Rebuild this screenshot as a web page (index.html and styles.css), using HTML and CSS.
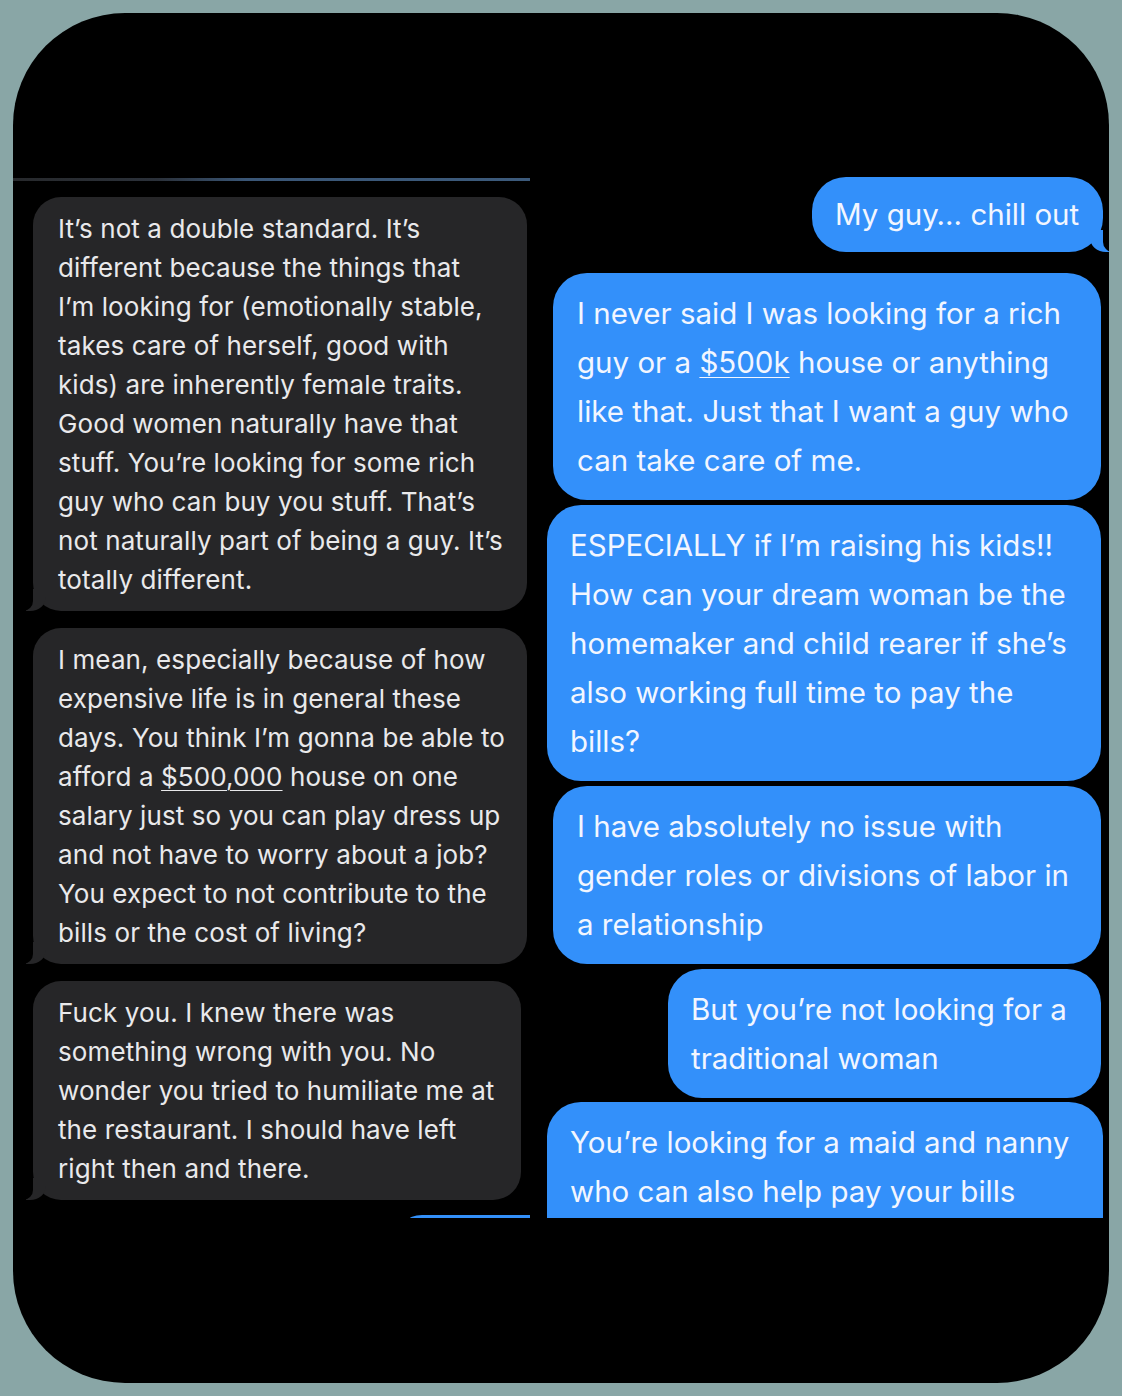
FILE: index.html
```html
<!DOCTYPE html>
<html lang="en">
<head>
<meta charset="UTF-8">
<meta name="viewport" content="width=device-width, initial-scale=1.0">
<title>Messages</title>
<link rel="stylesheet" href="styles.css">
</head>
<body>
    <div class="frame">
        <!-- left screenshot: received messages -->
        <div class="shot shot-left">
            <div class="rule"></div>
            <div class="bubble recv">It’s not a double standard. It’s<br>different because the things that<br>I’m looking for (emotionally stable,<br>takes care of herself, good with<br>kids) are inherently female traits.<br>Good women naturally have that<br>stuff. You’re looking for some rich<br>guy who can buy you stuff. That’s<br>not naturally part of being a guy. It’s<br>totally different.</div>
            <div class="bubble recv">I mean, especially because of how<br>expensive life is in general these<br>days. You think I’m gonna be able to<br>afford a <u>$500,000</u> house on one<br>salary just so you can play dress up<br>and not have to worry about a job?<br>You expect to not contribute to the<br>bills or the cost of living?</div>
            <div class="bubble recv recv-narrow">Fuck you. I knew there was<br>something wrong with you. No<br>wonder you tried to humiliate me at<br>the restaurant. I should have left<br>right then and there.</div>
            <div class="bubble sent-peek"></div>
        </div>

        <!-- right screenshot: sent messages -->
        <div class="shot shot-right">
            <div class="bubble sent sent-short">My guy… chill out</div>
            <div class="bubble sent sent-a">I never said I was looking for a rich<br>guy or a <u>$500k</u> house or anything<br>like that. Just that I want a guy who<br>can take care of me.</div>
            <div class="bubble sent sent-b">ESPECIALLY if I’m raising his kids!!<br>How can your dream woman be the<br>homemaker and child rearer if she’s<br>also working full time to pay the<br>bills?</div>
            <div class="bubble sent sent-a">I have absolutely no issue with<br>gender roles or divisions of labor in<br>a relationship</div>
            <div class="bubble sent sent-c">But you’re not looking for a<br>traditional woman</div>
            <div class="bubble sent sent-b sent-last">You’re looking for a maid and nanny<br>who can also help pay your bills</div>
        </div>
    </div>
</body>
</html>
```

FILE: styles.css
```css
body {
    margin: 0;
    padding: 0;
    background-color: #89a6a6;
}

.frame {
    display: flex;
    margin: 13px;
    width: 1096px;
    height: 1370px;
    background-color: #000;
    border-radius: 112px;
    overflow: hidden;
}

.shot {
    box-sizing: border-box;
    height: 1205px;
    padding-top: 165px;
    overflow: hidden;
    display: flex;
    flex-direction: column;
}

.shot > * {
    flex-shrink: 0;
}

.shot-left {
    width: 517px;
    font-family: "Inter", "Liberation Sans", sans-serif;
}

.shot-right {
    width: 579px;
    padding-top: 164px;
    padding-right: 8px;
    align-items: flex-end;
    font-family: "Inter", "Liberation Sans", sans-serif;
}

.rule {
    height: 3px;
    margin-bottom: 16px;
    background: linear-gradient(90deg, #27292c 0%, #2b313a 28%, #3a5676 45%, #3c5a7b 100%);
}

.bubble {
    position: relative;
    box-sizing: border-box;
}

/* grey received bubbles */
.recv {
    width: 494px;
    margin-left: 20px;
    margin-bottom: 17px;
    padding: 12px 16px 12px 25px;
    background-color: #262628;
    color: #e9e9eb;
    border-radius: 28px;
    font-size: 26px;
    letter-spacing: 0.1px;
    line-height: 39px;
    white-space: nowrap;
}

.recv-narrow {
    width: 488px;
    margin-bottom: 15px;
}

.recv::before {
    content: "";
    position: absolute;
    bottom: 0;
    left: -7px;
    width: 20px;
    height: 22px;
    background-color: #262628;
    border-bottom-right-radius: 16px 14px;
}

.recv::after {
    content: "";
    position: absolute;
    bottom: 0;
    left: -10px;
    width: 10px;
    height: 22px;
    background-color: #000;
    border-bottom-right-radius: 10px;
}

.recv u,
.sent u {
    text-decoration-thickness: 1px;
    text-underline-offset: 4px;
}

.sent-peek {
    align-self: flex-end;
    width: 142px;
    height: 40px;
    margin-right: -20px;
    background-color: #3390fa;
    border-top-left-radius: 14px 6px;
}

/* blue sent bubbles */
.sent {
    background-color: #3390fa;
    color: #f2f6ff;
    border-radius: 34px;
    font-size: 29.5px;
    line-height: 49px;
    padding: 15px 16px 15px 24px;
    margin-bottom: 5px;
    white-space: nowrap;
}

.sent-short {
    width: 291px;
    padding: 13px 16px 13px 23px;
    margin-right: -2px;
    margin-bottom: 21px;
}

.sent-short::before {
    content: "";
    position: absolute;
    bottom: 0;
    right: -7px;
    width: 20px;
    height: 22px;
    background-color: #3390fa;
    border-bottom-left-radius: 16px 14px;
}

.sent-short::after {
    content: "";
    position: absolute;
    bottom: 0;
    right: -10px;
    width: 10px;
    height: 22px;
    background-color: #000;
    border-bottom-left-radius: 10px;
}

.sent-a {
    width: 548px;
    padding-top: 16px;
    padding-bottom: 15px;
}

.sent-b {
    width: 554px;
    padding-left: 23px;
    padding-top: 16px;
    padding-bottom: 15px;
}

.sent-c {
    width: 433px;
    padding-left: 23px;
    padding-top: 16px;
    padding-bottom: 15px;
    margin-bottom: 4px;
}

.sent-last {
    width: 556px;
    margin-right: -2px;
    padding-bottom: 40px;
}
```
